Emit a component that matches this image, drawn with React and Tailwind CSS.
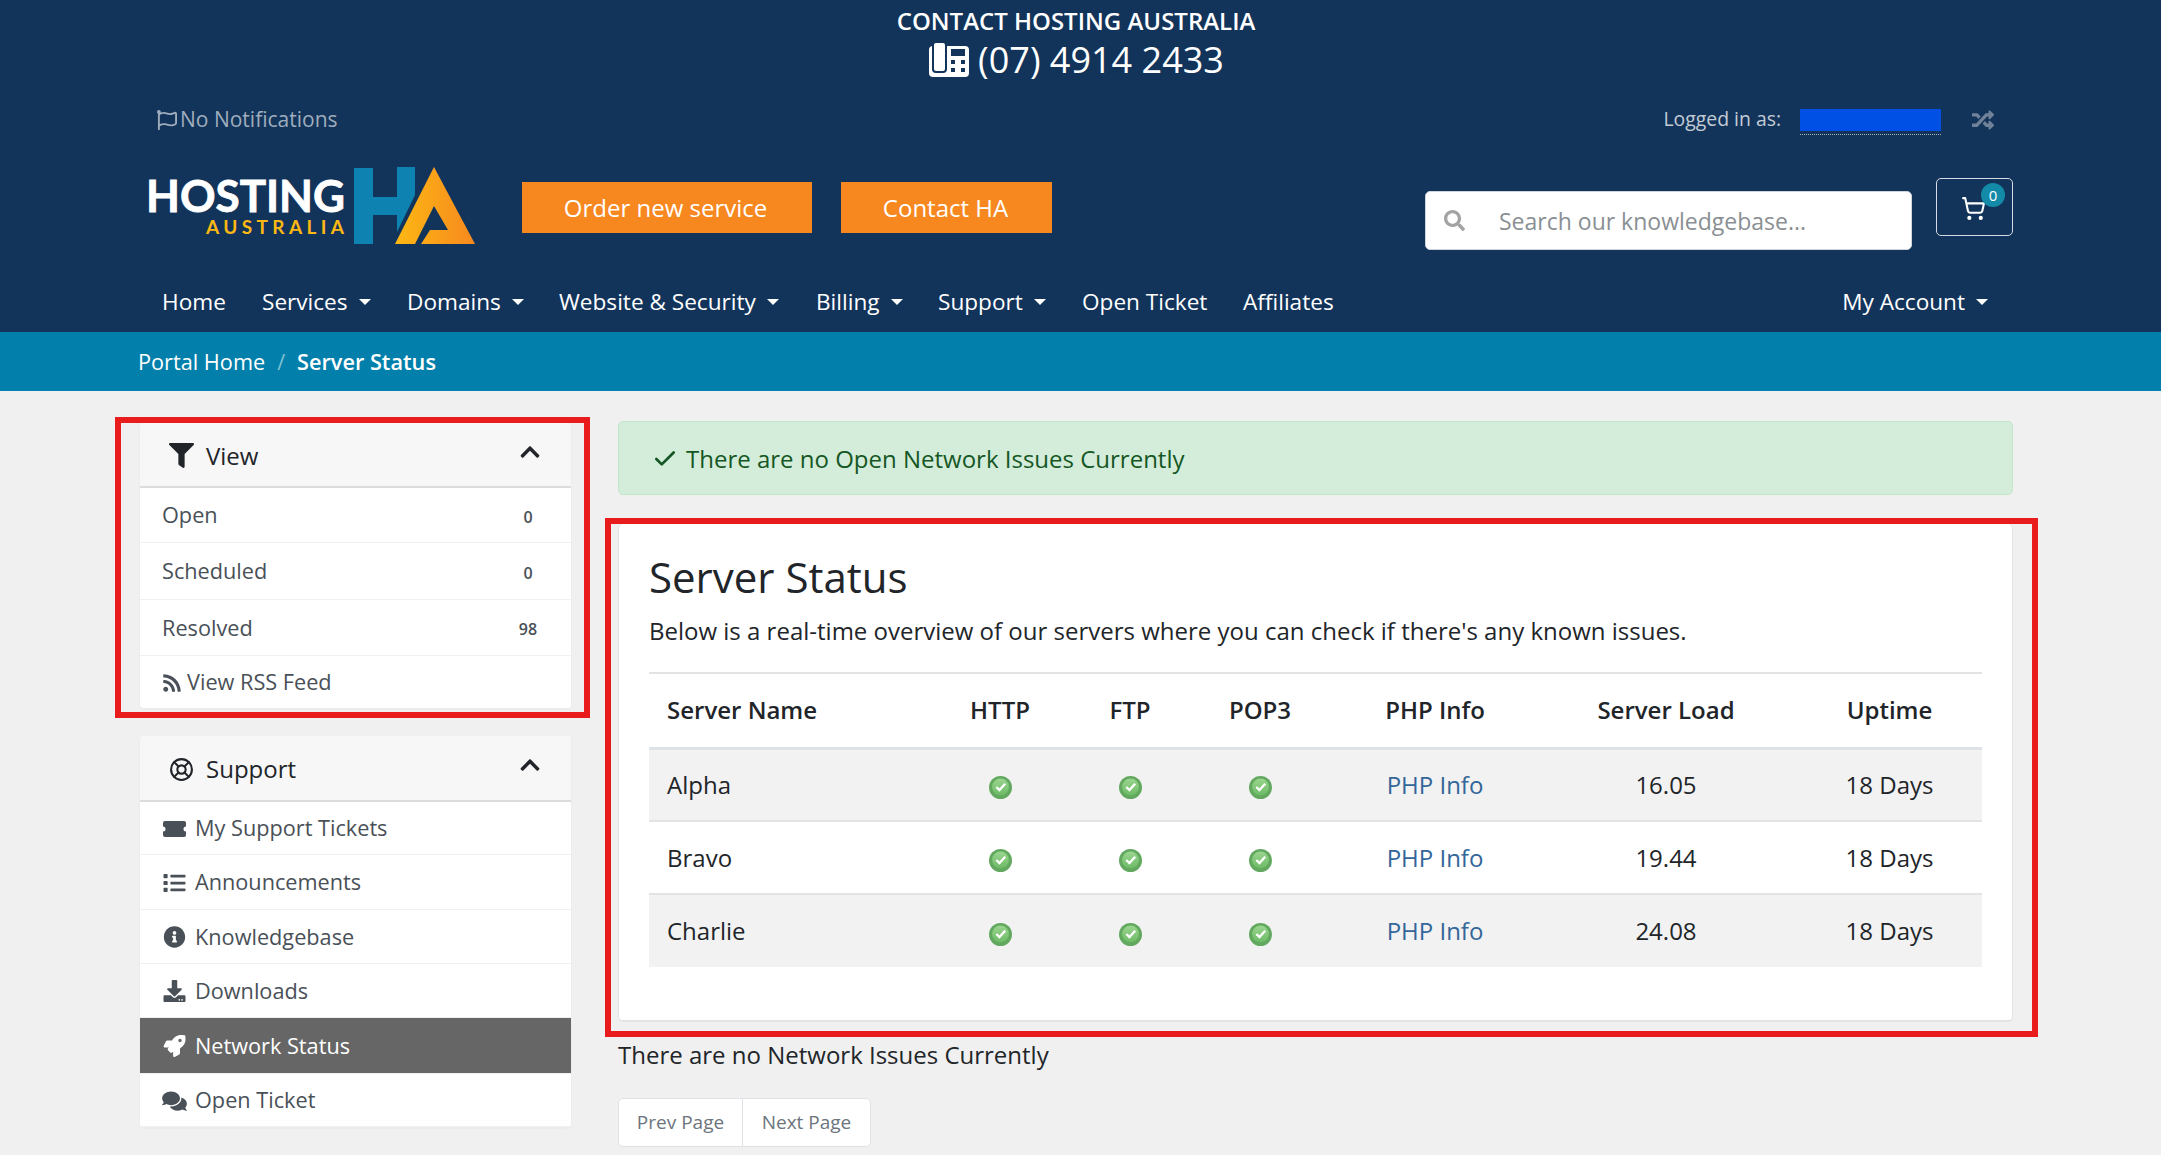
import React from "react";
import {
  FaChevronUp,
  FaComments,
  FaDownload,
  FaFilter,
  FaInfoCircle,
  FaList,
  FaRandom,
  FaRegFlag,
  FaRocket,
  FaRss,
  FaSearch,
} from "react-icons/fa";
import { Check, LifeBuoy, ShoppingCart } from "lucide-react";

const navItems = [
  { label: "Home", className: "w-[100px]" },
  { label: "Services", caret: true, className: "w-[145px]" },
  { label: "Domains", caret: true, className: "w-[152px]" },
  { label: "Website & Security", caret: true, className: "w-[257px]" },
  { label: "Billing", caret: true, className: "w-[122px]" },
  { label: "Support", caret: true, className: "w-[144px]" },
  { label: "Open Ticket", className: "w-[161px]" },
  { label: "Affiliates", className: "w-auto" },
];

const servers = [
  { name: "Alpha", load: "16.05", className: "bg-[#f2f2f2] border-b-2 border-[#e3e3e3]" },
  { name: "Bravo", load: "19.44", className: "bg-white border-b-2 border-[#e3e3e3]" },
  { name: "Charlie", load: "24.08", className: "bg-[#f2f2f2]" },
];

const TicketIcon = ({ className }) => (
  <svg className={className} viewBox="0 0 25 22" fill="currentColor">
    <path d="M3 3h19a2 2 0 0 1 2 2v3.5a2.5 2.5 0 0 0 0 5V17a2 2 0 0 1-2 2H3a2 2 0 0 1-2-2v-3.500a2.500 2.500 0 0 0 0-5V5a2 2 0 0 1 2-2z" />
  </svg>
);

const supportLinks = [
  { label: "My Support Tickets", icon: TicketIcon, className: "h-[53px]" },
  { label: "Announcements", icon: FaList, className: "h-[55px]" },
  { label: "Knowledgebase", icon: FaInfoCircle, className: "h-[54px]" },
  { label: "Downloads", icon: FaDownload, className: "h-[54px]" },
  { label: "Network Status", icon: FaRocket, active: true, className: "h-[56px]" },
  { label: "Open Ticket", icon: FaComments, className: "h-[53px]" },
];

const Caret = () => (
  <span className="ml-[11px] inline-block h-0 w-0 border-x-[6px] border-t-[6px] border-x-transparent border-t-white"></span>
);

const PhoneIcon = () => (
  <svg className="h-[36px] w-[42px]" viewBox="0 0 42 36" fill="none">
    <rect x="1" y="4" width="40" height="31" rx="4" fill="#fff" />
    <rect x="5" y="0" width="13" height="30" rx="3" fill="#fff" stroke="#12345a" strokeWidth="2" />
    <rect x="23" y="7" width="14" height="7" fill="#12345a" />
    <g fill="#12345a">
      <rect x="23" y="18" width="4" height="4" />
      <rect x="33" y="18" width="4" height="4" />
      <rect x="23" y="26" width="4" height="4" />
      <rect x="33" y="26" width="4" height="4" />
    </g>
  </svg>
);

const Logo = () => (
  <svg className="h-[110px] w-[360px] shrink-0" viewBox="0 0 360 110">
    <defs>
      <linearGradient id="logo-a" x1="0" y1="0" x2="1" y2="0">
        <stop offset="0" stopColor="#fdb813" />
        <stop offset="1" stopColor="#f7891f" />
      </linearGradient>
    </defs>
    <text
      x="16"
      y="62"
      fill="#fff"
      stroke="#fff"
      strokeWidth="0.8"
      fontFamily="Lato"
      fontWeight="700"
      fontSize="44"
      textLength="199"
      lengthAdjust="spacingAndGlyphs"
    >
      HOSTING
    </text>
    <text
      x="76"
      y="84"
      fill="#fdb813"
      fontFamily="Lato"
      fontWeight="700"
      fontSize="19"
      textLength="138"
      lengthAdjust="spacing"
    >
      AUSTRALIA
    </text>
    <polygon
      points="224,18 243,18 243,47 267,47 267,17 285,17 285,45 267,82 267,65 243,65 243,94 224,94"
      fill="#0e83b2"
    />
    <polygon
      points="265,94 285,94 304,56 318,80 300,80 291,94 345,94 304,17"
      fill="url(#logo-a)"
    />
  </svg>
);

const StatusOk = () => (
  <svg className="mx-auto mt-[6px] block h-[23px] w-[23px]" viewBox="0 0 22 22">
    <defs>
      <linearGradient id="status-ok" x1="0" y1="0" x2="0" y2="1">
        <stop offset="0" stopColor="#9ad58f" />
        <stop offset="1" stopColor="#6dbb66" />
      </linearGradient>
    </defs>
    <circle cx="11" cy="11" r="11" fill="#62a95f" />
    <circle cx="11" cy="10.500" r="8" fill="url(#status-ok)" />
    <path d="M7 10.500l3 3 5.500-6" fill="none" stroke="#fff" strokeWidth="2.200" />
  </svg>
);

const Sidebar = ({ icon: Icon, title, className, headerClass, children }) => (
  <div className={`relative rounded-[5px] border-x border-b-2 border-[#ececec] bg-white ${className}`}>
    <div className={`flex items-center justify-between rounded-t-[5px] border-b-2 border-[#dcdcdc] bg-[#f7f7f7] pl-[29px] pr-[30px] ${headerClass}`}>
      <div className="flex items-center pt-[2px] text-[#212529]">
        <span className="flex w-[37px] items-center">
          <Icon className="h-[25px] w-[25px]" />
        </span>
        <span className="text-[24px]">{title}</span>
      </div>
      <FaChevronUp className="mb-[6px] h-[22px] w-[22px] text-[#212529]" />
    </div>
    {children}
  </div>
);

const App = () => {
  return (
    <div className="h-[1155px] overflow-hidden bg-[#f0f0f0] text-[24px] text-[#212529] font-['Open_Sans',sans-serif]">
      {/* Top header */}
      <header className="h-[332px] bg-[#12345a] pl-[139px] pr-[148px] text-white">
        <div className="pt-[6px] text-center">
          <div className="h-[30px] text-[24px] font-semibold leading-[30px]">CONTACT HOSTING AUSTRALIA</div>
          <div className="mt-[3px] flex h-[42px] items-center justify-center text-[36px] leading-[42px]">
            <PhoneIcon />
            <span className="ml-[8px]">(07) 4914 2433</span>
          </div>
        </div>

        <div className="mt-[23px] flex h-[32px] items-center justify-between pl-[18px] text-[21px]">
          <div className="flex items-center text-[#9fadbd]">
            <FaRegFlag className="mr-[3px] h-[20px] w-[20px]" />
            No Notifications
          </div>
          <div className="flex items-center pr-[19px] text-[#c3ccd6]">
            <span className="-mt-[3px] text-[19.400px]">Logged in as:</span>
            <span className="ml-[19px] mt-[3px] w-[141px] border-b border-dotted border-[#a9b6c4] pb-[3px]">
              <span className="block h-[22px] bg-[#0050e6]"></span>
            </span>
            <FaRandom className="ml-[31px] h-[22px] w-[22px] text-[#6f8299]" />
          </div>
        </div>

        <div className="mt-[14px] flex h-[110px] items-start">
          <div className="-ml-[9px] shrink-0">
            <Logo />
          </div>
          <a className="ml-[32px] mt-[32px] flex h-[51px] w-[290px] items-center justify-center bg-[#f7871f] pr-[3px] text-[24px]">
            Order new service
          </a>
          <a className="ml-[29px] mt-[32px] flex h-[51px] w-[211px] items-center justify-center bg-[#f7871f] pr-[2px] text-[24px]">
            Contact HA
          </a>
          <div className="ml-auto mt-[41px] flex h-[59px] w-[487px] items-center rounded-[5px] border border-[#ced4da] bg-white pl-[18px] text-[23px] text-[#8a8f94]">
            <FaSearch className="h-[21px] w-[21px] text-[#a3a3a3]" />
            <span className="ml-[34px] mt-[1px]">Search our knowledgebase...</span>
          </div>
          <div className="relative ml-[24px] mt-[28px] flex h-[58px] w-[77px] items-center justify-center rounded-[5px] border border-[#d5dbe2] pr-[2px] pt-[3px]">
            <ShoppingCart className="h-[25px] w-[25px]" strokeWidth={2} />
            <span className="absolute left-[44px] top-[4px] flex h-[24px] w-[24px] items-center justify-center rounded-full bg-[#138aa8] text-[15px]">
              0
            </span>
          </div>
        </div>

        <nav className="mt-[22px] flex h-[40px] items-center pl-[23px] text-[22.600px]">
          {navItems.map((item) => (
            <a key={item.label} className={`flex items-center ${item.className}`}>
              {item.label}
              {item.caret && <Caret />}
            </a>
          ))}
          <a className="ml-auto flex items-center pr-[25px]">
            My Account
            <Caret />
          </a>
        </nav>
      </header>

      {/* Breadcrumb */}
      <div className="flex h-[59px] items-center bg-[#0280ab] pl-[138px] pt-[1px] text-[21.700px] text-white">
        <span>Portal Home</span>
        <span className="mx-[12px] text-[#7fbfd5]">/</span>
        <span className="font-semibold">Server Status</span>
      </div>

      <div className="flex gap-[46px] pl-[139px] pr-[148px] pt-[32px]">
        {/* Sidebar */}
        <aside className="w-[433px] shrink-0 text-[21.700px]">
          <Sidebar icon={FaFilter} title="View" className="h-[287px]" headerClass="h-[65px]">
            {[
              { label: "Open", count: "0", className: "h-[55px]" },
              { label: "Scheduled", count: "0", className: "h-[57px]" },
              { label: "Resolved", count: "98", className: "h-[56px]" },
            ].map((row) => (
              <div
                key={row.label}
                className={`flex items-center justify-between border-b border-[#f0f0f0] pl-[22px] pr-[28px] pt-[1px] text-[#495057] ${row.className}`}
              >
                <span>{row.label}</span>
                <span className="mt-[2px] w-[30px] text-center text-[16px] font-semibold">{row.count}</span>
              </div>
            ))}
            <div className="flex h-[52px] items-center pl-[22px] pt-[1px] text-[#495057]">
              <FaRss className="mr-[5px] h-[20px] w-[20px]" />
              View RSS Feed
            </div>
            <div className="pointer-events-none absolute -left-[25px] -right-[19px] -top-[6px] -bottom-[10px] border-[6px] border-[#e81c1c]"></div>
          </Sidebar>

          <Sidebar icon={LifeBuoy} title="Support" className="mt-[26px]" headerClass="h-[66px]">
            {supportLinks.map(({ label, icon: Icon, active, className }) => (
              <div
                key={label}
                className={`flex items-center border-b border-[#f0f0f0] pl-[22px] pt-[1px] ${className} ${
                  active ? "bg-[#666666] text-white" : "text-[#495057]"
                }`}
              >
                <span className="flex w-[33px] items-center">
                  <Icon className="h-[22px] w-[25px]" />
                </span>
                {label}
              </div>
            ))}
          </Sidebar>
        </aside>

        {/* Main column */}
        <main className="min-w-0 flex-1">
          <div className="-mt-[2px] flex h-[74px] items-center rounded-[5px] border border-[#c3e6cb] bg-[#d4edda] pl-[33px] pt-[1px] text-[#155724]">
            <Check className="mr-[8px] h-[26px] w-[26px]" strokeWidth={2.500} />
            There are no Open Network Issues Currently
          </div>

          <div className="relative mt-[29px] h-[498px] rounded-[5px] border-x border-b-2 border-[#e3e3e3] bg-white px-[30px] pt-[26px]">
            <h1 className="h-[54px] text-[42px] leading-[54px]">Server Status</h1>
            <p className="mt-[12px] h-[30px] leading-[30px]">
              Below is a real-time overview of our servers where you can check if there's any known issues.
            </p>
            <table className="mt-[26px] w-full table-fixed border-collapse border-t-2 border-[#e3e3e3]">
              <thead>
                <tr className="h-[75px] border-b-[3px] border-[#dee2e6]">
                  <th className="w-[281px] pl-[18px] text-left font-semibold">Server Name</th>
                  <th className="w-[140px] font-semibold">HTTP</th>
                  <th className="w-[120px] font-semibold">FTP</th>
                  <th className="w-[140px] font-semibold">POP3</th>
                  <th className="w-[210px] font-semibold">PHP Info</th>
                  <th className="w-[252px] font-semibold">Server Load</th>
                  <th className="pl-[5px] font-semibold">Uptime</th>
                </tr>
              </thead>
              <tbody>
                {servers.map((s) => (
                  <tr key={s.name} className={`h-[73px] text-center ${s.className}`}>
                    <td className="pl-[18px] text-left">{s.name}</td>
                    <td><StatusOk /></td>
                    <td><StatusOk /></td>
                    <td><StatusOk /></td>
                    <td className="text-[#336699]">PHP Info</td>
                    <td>{s.load}</td>
                    <td className="pl-[5px]">18 Days</td>
                  </tr>
                ))}
              </tbody>
            </table>
            <div className="pointer-events-none absolute -left-[14px] -right-[26px] -top-[6px] -bottom-[17px] border-[6px] border-[#e81c1c]"></div>
          </div>

          <p className="mt-[18px] h-[30px] leading-[30px]">There are no Network Issues Currently</p>

          <div className="mt-[28px] flex h-[49px] w-[253px] rounded-[5px] border border-[#dee2e6] bg-white text-[19px] text-[#6c757d]">
            <span className="flex w-[124px] items-center justify-center border-r border-[#dee2e6]">Prev Page</span>
            <span className="flex flex-1 items-center justify-center">Next Page</span>
          </div>
        </main>
      </div>
    </div>
  );
};

export default App;
